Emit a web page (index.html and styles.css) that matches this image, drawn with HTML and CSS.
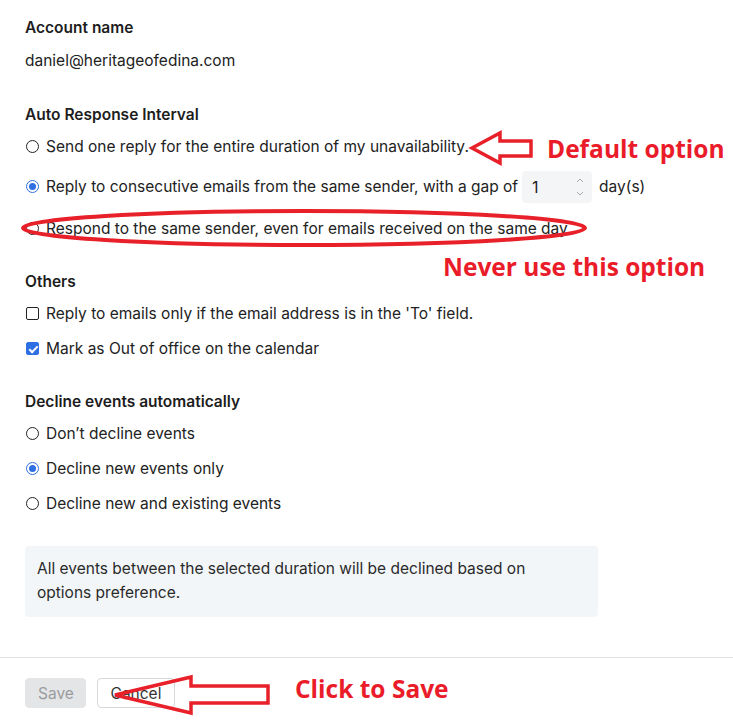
FILE: index.html
```html
<!DOCTYPE html>
<html lang="en">

<head>
    <meta charset="UTF-8">
    <meta name="viewport" content="width=device-width, initial-scale=1.0">
    <title>Out of office settings</title>
    <link rel="stylesheet" href="styles.css">
</head>

<body>
    <div class="page">
        <div class="settings">
            <section class="group group-account">
                <h3>Account name</h3>
                <p class="value">daniel@heritageofedina.com</p>
            </section>

            <section class="group">
                <h3>Auto Response Interval</h3>
                <div class="opt"><span class="radio"></span>Send one reply for the entire duration of my unavailability.</div>
                <div class="opt opt-gap"><span class="radio on"></span>Reply to consecutive emails from the same sender, with a gap of
                    <span class="num">1
                        <svg class="spin" width="8" height="20" viewBox="0 0 8 20">
                            <path d="M1 5 L4 2 L7 5 M1 15 L4 18 L7 15" />
                        </svg>
                    </span> day(s)</div>
                <div class="opt"><span class="radio"></span>Respond to the same sender, even for emails received on the same day</div>
            </section>

            <section class="group">
                <h3>Others</h3>
                <div class="opt"><span class="check"></span>Reply to emails only if the email address is in the 'To' field.</div>
                <div class="opt"><span class="check on"></span>Mark as Out of office on the calendar</div>
            </section>

            <section class="group">
                <h3>Decline events automatically</h3>
                <div class="opt"><span class="radio"></span>Don’t decline events</div>
                <div class="opt"><span class="radio on"></span>Decline new events only</div>
                <div class="opt"><span class="radio"></span>Decline new and existing events</div>
            </section>

            <div class="note">All events between the selected duration will be declined based on options preference.</div>
        </div>

        <div class="footer">
            <button class="btn btn-save">Save</button>
            <button class="btn btn-cancel">Cancel</button>
        </div>

        <!-- red annotations drawn on top of the screenshot -->
        <svg class="marks" width="733" height="726" viewBox="0 0 733 726">
            <polygon points="472,148 500,133 500,141 531,141 531,156 500,156 500,163" />
            <ellipse cx="304" cy="228" rx="281" ry="17" />
            <polygon points="115,695 191,677 191,686 268,686 268,703 191,703 191,713" />
        </svg>
        <span class="tag tag-default">Default option</span>
        <span class="tag tag-never">Never use this option</span>
        <span class="tag tag-save">Click to Save</span>
    </div>
</body>

</html>
```

FILE: styles.css
```css
body {
    margin: 0;
    background: #fff;
    color: #222;
    font-family: Inter, 'Noto Sans', sans-serif;
    font-size: 15.5px;
}

.page {
    position: relative;
    width: 733px;
    height: 726px;
    overflow: hidden;
}

.settings {
    padding: 18px 25px 0 25px;
}

.group {
    margin-bottom: 26px;
}

.group-account {
    margin-bottom: 34px;
}

.group h3 {
    margin: 0;
    font-size: 15.5px;
    font-weight: 600;
    line-height: 20px;
    color: #1d1d1d;
}

.value {
    margin: 13px 0 0 0;
    line-height: 20px;
}

.opt {
    display: flex;
    align-items: center;
    height: 35px;
    line-height: 20px;
    white-space: nowrap;
}

.group h3 + .opt {
    margin-top: 4px;
}

.opt-gap {
    height: 45px;
    margin-bottom: 2px;
}

.radio {
    width: 11px;
    height: 11px;
    border: 1.5px solid #222;
    border-radius: 50%;
    margin: 0 7px 0 1px;
    flex-shrink: 0;
    position: relative;
}

.radio.on {
    border-color: #2f6fe4;
}

.radio.on::after {
    content: '';
    position: absolute;
    left: 2px;
    top: 2px;
    width: 7px;
    height: 7px;
    border-radius: 50%;
    background: #2f6fe4;
}

.check {
    width: 11px;
    height: 11px;
    border: 1.5px solid #222;
    border-radius: 2px;
    margin: 0 7px 0 1px;
    flex-shrink: 0;
    position: relative;
}

.check.on {
    background: #2f6fe4;
    border-color: #2f6fe4;
}

.check.on::after {
    content: '';
    position: absolute;
    left: 3.5px;
    top: 0.5px;
    width: 3px;
    height: 7px;
    border: solid #fff;
    border-width: 0 2px 2px 0;
    transform: rotate(45deg);
}

.num {
    display: inline-flex;
    align-items: center;
    justify-content: space-between;
    box-sizing: border-box;
    width: 70px;
    height: 32px;
    margin: 0 7px 0 4px;
    padding: 0 8px 0 10px;
    background: #f4f5f7;
    border-radius: 4px;
    font-size: 16px;
}

.spin path {
    fill: none;
    stroke: #aaa;
    stroke-width: 1;
}

.note {
    width: 573px;
    box-sizing: border-box;
    padding: 11px 60px 12px 12px;
    margin-top: -1px;
    background: #f3f6f9;
    border-radius: 4px;
    line-height: 24px;
    color: #2a2a2a;
}

.footer {
    position: absolute;
    left: 0;
    right: 0;
    top: 657px;
    border-top: 1px solid #e2e2e2;
    padding: 20px 25px;
    display: flex;
    gap: 11px;
}

.btn {
    height: 30px;
    font-family: Inter, 'Noto Sans', sans-serif;
    font-size: 15.5px;
    border-radius: 4px;
    padding: 0 12px;
}

.btn-save {
    width: 61px;
    background: #e4e5e7;
    color: #9a9ca0;
    border: 1px solid #e4e5e7;
}

.btn-cancel {
    background: #fff;
    color: #333;
    border: 1px solid #d6d8db;
    width: 78px;
}

.marks {
    position: absolute;
    left: 0;
    top: 0;
}

.marks polygon {
    fill: none;
    stroke: #e8202a;
    stroke-width: 3.5;
}

.marks ellipse {
    fill: none;
    stroke: #e8202a;
    stroke-width: 4;
}

.tag {
    position: absolute;
    color: #ea1c2a;
    font-family: 'Open Sans', sans-serif;
    font-weight: 700;
    font-size: 24.5px;
    line-height: 30px;
    white-space: nowrap;
}

.tag-default {
    left: 547px;
    top: 134px;
}

.tag-never {
    left: 443px;
    top: 252px;
}

.tag-save {
    left: 295px;
    top: 674px;
}
```
